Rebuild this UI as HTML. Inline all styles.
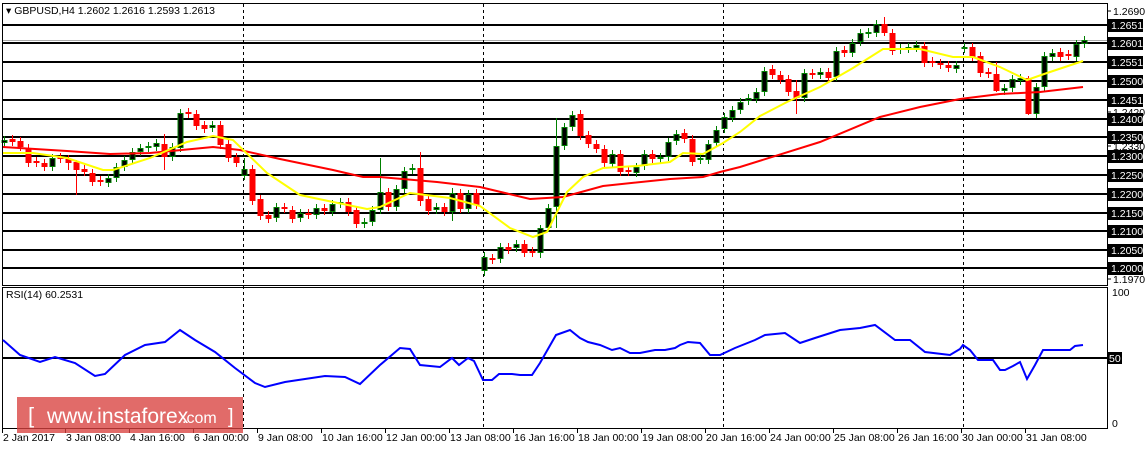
<!DOCTYPE html>
<html><head><meta charset="utf-8"><style>
html,body{margin:0;padding:0;background:#fff;width:1147px;height:449px;overflow:hidden}
svg{display:block}
text{font-family:"Liberation Sans",sans-serif;font-size:10.5px}
</style></head><body>
<svg id="s" width="1147" height="449" xmlns="http://www.w3.org/2000/svg">
<rect width="1147" height="449" fill="#fff"/>
<g id="grid" stroke="#000" stroke-width="2"></g>
<line x1="3" y1="40.5" x2="1107" y2="40.5" stroke="#aaa" stroke-width="1"/>
<g stroke="#000" stroke-width="1" stroke-dasharray="3,3">
<line x1="243.5" y1="4" x2="243.5" y2="428"/><line x1="483.5" y1="4" x2="483.5" y2="428"/>
<line x1="723.5" y1="4" x2="723.5" y2="428"/><line x1="963.5" y1="4" x2="963.5" y2="428"/>
</g>
<g id="cd"></g>
<polyline fill="none" stroke="#ff0000" stroke-width="2" points="3,147 67,151 110,154 150,153 213,147 240,150 280,159 333,170 363,177 380,177 437,182 480,187 530,199 563,197 603,186 670,179 703,177 720,172 740,167 820,142 880,117 920,107 960,99 1000,94 1040,92 1083,87"/>
<polyline fill="none" stroke="#ffff00" stroke-width="2" points="3,153 33,153 67,158 103,170 113,170 150,158 187,142 213,136 233,140 267,173 300,195 333,202 367,209 380,207 410,193 450,198 480,206 510,228 533,237 547,232 567,192 583,177 603,168 637,166 670,162 683,153 703,154 723,143 740,132 760,116 787,102 820,87 853,68 883,49 920,49 953,57 973,57 1000,67 1027,80 1047,73 1083,61"/>
<rect x="2.5" y="3.5" width="1105" height="282" fill="none" stroke="#000" stroke-width="1"/>
<rect x="2.5" y="287.5" width="1105" height="141" fill="none" stroke="#000" stroke-width="1"/>
<line x1="3" y1="358" x2="1107" y2="358" stroke="#000" stroke-width="2"/>
<polyline fill="none" stroke="#0000ff" stroke-width="2" points="3,340 20,355 40,362 55,357 75,363 95,376 105,374 125,355 145,345 165,342 180,330 195,340 215,352 235,368 255,383 265,387 285,382 305,379 325,376 345,377 360,384 380,365 400,348 410,349 420,365 440,367 452,358 459,365 468,358 474,361 483,380 492,380 499,374 512,374 520,375 532,375 540,363 556,335 570,330 580,338 588,342 600,345 612,350 620,348 630,353 640,353 655,350 665,350 675,348 680,345 688,342 700,343 710,355 720,355 735,348 755,340 765,335 785,333 800,343 815,338 840,330 860,328 875,325 895,340 910,340 925,352 950,355 960,349 963,345 970,350 978,360 985,360 993,360 1000,370 1005,370 1013,366 1020,362 1027,379 1035,365 1043,350 1048,350 1070,350 1075,346 1083,345"/>
<text x="6" y="14" fill="#000">▾ GBPUSD,H4  1.2602 1.2616 1.2593 1.2613</text>
<text x="6" y="298" fill="#000">RSI(14) 60.2531</text>
<g id="ax"></g>
<line x1="3" y1="428.5" x2="1107" y2="428.5" stroke="#000"/>
<g id="tx"></g>
<rect x="17" y="397" width="226" height="36" fill="#d9413f" fill-opacity="0.78"/>
<text x="28" y="423" fill="#fff" style="font-size:22px">[</text>
<text x="47" y="423" fill="#fff" style="font-size:21px">www.instaforex</text>
<text x="182" y="423" fill="#fff" style="font-size:16px">.com</text>
<text x="228" y="423" fill="#fff" style="font-size:20px">]</text>
</svg>
<script>
var ns="http://www.w3.org/2000/svg";
function el(p,t,a){var e=document.createElementNS(ns,t);for(var k in a)e.setAttribute(k,a[k]);p.appendChild(e);return e;}
var g=document.getElementById('grid');
var lv=[[25,'1.2651'],[43,'1.2601'],[62,'1.2551'],[81,'1.2500'],[100,'1.2451'],[119,'1.2400'],[137,'1.2350'],[156,'1.2300'],[175,'1.2250'],[194,'1.2200'],[213,'1.2150'],[231,'1.2100'],[250,'1.2050'],[268,'1.2000']];
var ax=document.getElementById('ax');
lv.forEach(function(l){el(g,'line',{x1:3,y1:l[0],x2:1107,y2:l[0]});
el(ax,'rect',{x:1108,y:l[0]-6,width:35,height:13,fill:'#000'});
var t=el(ax,'text',{x:1111,y:l[0]+4,fill:'#fff'});t.textContent=l[1];});
[[11,'1.2690'],[112,'1.2420'],[146,'1.2330'],[279,'1.1970']].forEach(function(l){
el(ax,'line',{x1:1107,y1:l[0],x2:1111,y2:l[0],stroke:'#000'});var t=el(ax,'text',{x:1113,y:l[0]+4,fill:'#000'});t.textContent=l[1];});
[[292,'100'],[423,'0']].forEach(function(l){var t=el(ax,'text',{x:1112,y:l[0]+4,fill:'#000'});t.textContent=l[1];});
el(ax,'rect',{x:1108,y:352,width:14,height:12,fill:'#000'});
var t5=el(ax,'text',{x:1109,y:362,fill:'#fff'});t5.textContent='50';
var tx=document.getElementById('tx');
[[3,'2 Jan 2017'],[66,'3 Jan 08:00'],[130,'4 Jan 16:00'],[194,'6 Jan 00:00'],[258,'9 Jan 08:00'],[322,'10 Jan 16:00'],[386,'12 Jan 00:00'],[450,'13 Jan 08:00'],[514,'16 Jan 16:00'],[578,'18 Jan 00:00'],[642,'19 Jan 08:00'],[706,'20 Jan 16:00'],[770,'24 Jan 00:00'],[834,'25 Jan 08:00'],[898,'26 Jan 16:00'],[962,'30 Jan 00:00'],[1026,'31 Jan 08:00']].forEach(function(l){
el(tx,'line',{x1:l[0]-0.5,y1:429,x2:l[0]-0.5,y2:433,stroke:'#000'});var t=el(tx,'text',{x:l[0],y:441,fill:'#000'});t.textContent=l[1];});
var c=[['g',140,143],['r',139,142],['r',141,147],['r',148,163],['r',161,163],['r',163,167],['g',158,167],['r',157,159],['r',159,163],['r',162,170],['r',169,172],['r',173,182],['r',180,182],['g',178,183],['g',167,178],['g',160,167],['g',152,160],['g',148,152],['g',146,148],['g',143,147],['r',144,157],['g',147,157],['g',113,148],['r',112,114],['r',114,126],['r',125,129],['g',125,128],['r',125,145],['r',144,158],['r',157,163],['g',169,176],['r',169,201],['r',199,216],['r',215,219],['g',207,218],['r',207,209],['r',210,219],['g',213,218],['r',213,215],['g',208,215],['r',208,211],['g',204,212],['g',202,204],['r',202,212],['r',210,224],['g',222,224],['g',210,222],['g',192,210],['r',192,207],['g',189,207],['g',171,189],['g',168,170],['r',168,201],['r',199,211],['g',207,210],['r',207,212],['g',193,212],['r',193,209],['g',194,209],['r',193,205],['g',257,271],['r',258,260],['g',247,259],['r',247,250],['g',244,248],['r',244,253],['r',251,253],['g',228,253],['g',208,228],['g',146,207],['g',127,146],['g',115,127],['r',114,136],['r',135,144],['r',144,149],['r',149,163],['g',154,164],['r',154,172],['r',170,172],['g',167,173],['g',154,166],['r',154,159],['g',157,159],['g',142,157],['g',134,141],['r',133,139],['r',139,162],['g',158,160],['g',144,160],['g',130,143],['g',117,129],['g',110,118],['g',102,110],['g',98,101],['g',92,99],['g',71,92],['r',69,75],['r',75,80],['r',79,92],['r',91,98],['g',73,98],['r',73,75],['g',72,75],['r',72,78],['g',51,77],['r',50,53],['g',43,53],['g',33,42],['g',32,34],['g',24,33],['r',24,33],['r',33,51],['g',48,50],['g',47,49],['g',45,48],['r',46,63],['r',61,63],['r',63,65],['r',65,68],['g',65,69],['g',47,49],['r',47,57],['r',56,73],['r',72,74],['r',74,91],['g',88,91],['g',79,88],['g',78,81],['r',78,114],['g',87,114],['g',56,87],['g',53,57],['r',52,57],['r',54,56],['g',44,57],['g',40,44]];
var cg=document.getElementById('cd');
var longw={9:[160,195],60:[252,276],69:[118,228],31:[165,205],20:[134,170],67:[225,258],128:[76,115],124:[62,92],110:[17,36],47:[158,214],52:[152,206],56:[188,221],8:[155,170],99:[80,114],30:[158,180]};
c.forEach(function(d,i){var x=4+8*i,col=d[0]=='g'?'#008000':'#ff0000';
var hi=d[1]-4,lo=d[2]+4;if(longw[i]){hi=longw[i][0];lo=longw[i][1];}
el(cg,'line',{x1:x+0.5,y1:hi,x2:x+0.5,y2:lo,stroke:col,'stroke-width':1});
var h=Math.max(d[2]-d[1],2);
if(d[0]=='g')el(cg,'rect',{x:x-2,y:d[1]+0.5,width:5,height:h-1,fill:'#000',stroke:'#008000','stroke-width':1});
else el(cg,'rect',{x:x-2.5,y:d[1],width:6,height:h,fill:'#ff0000'});});
</script>
</body></html>
